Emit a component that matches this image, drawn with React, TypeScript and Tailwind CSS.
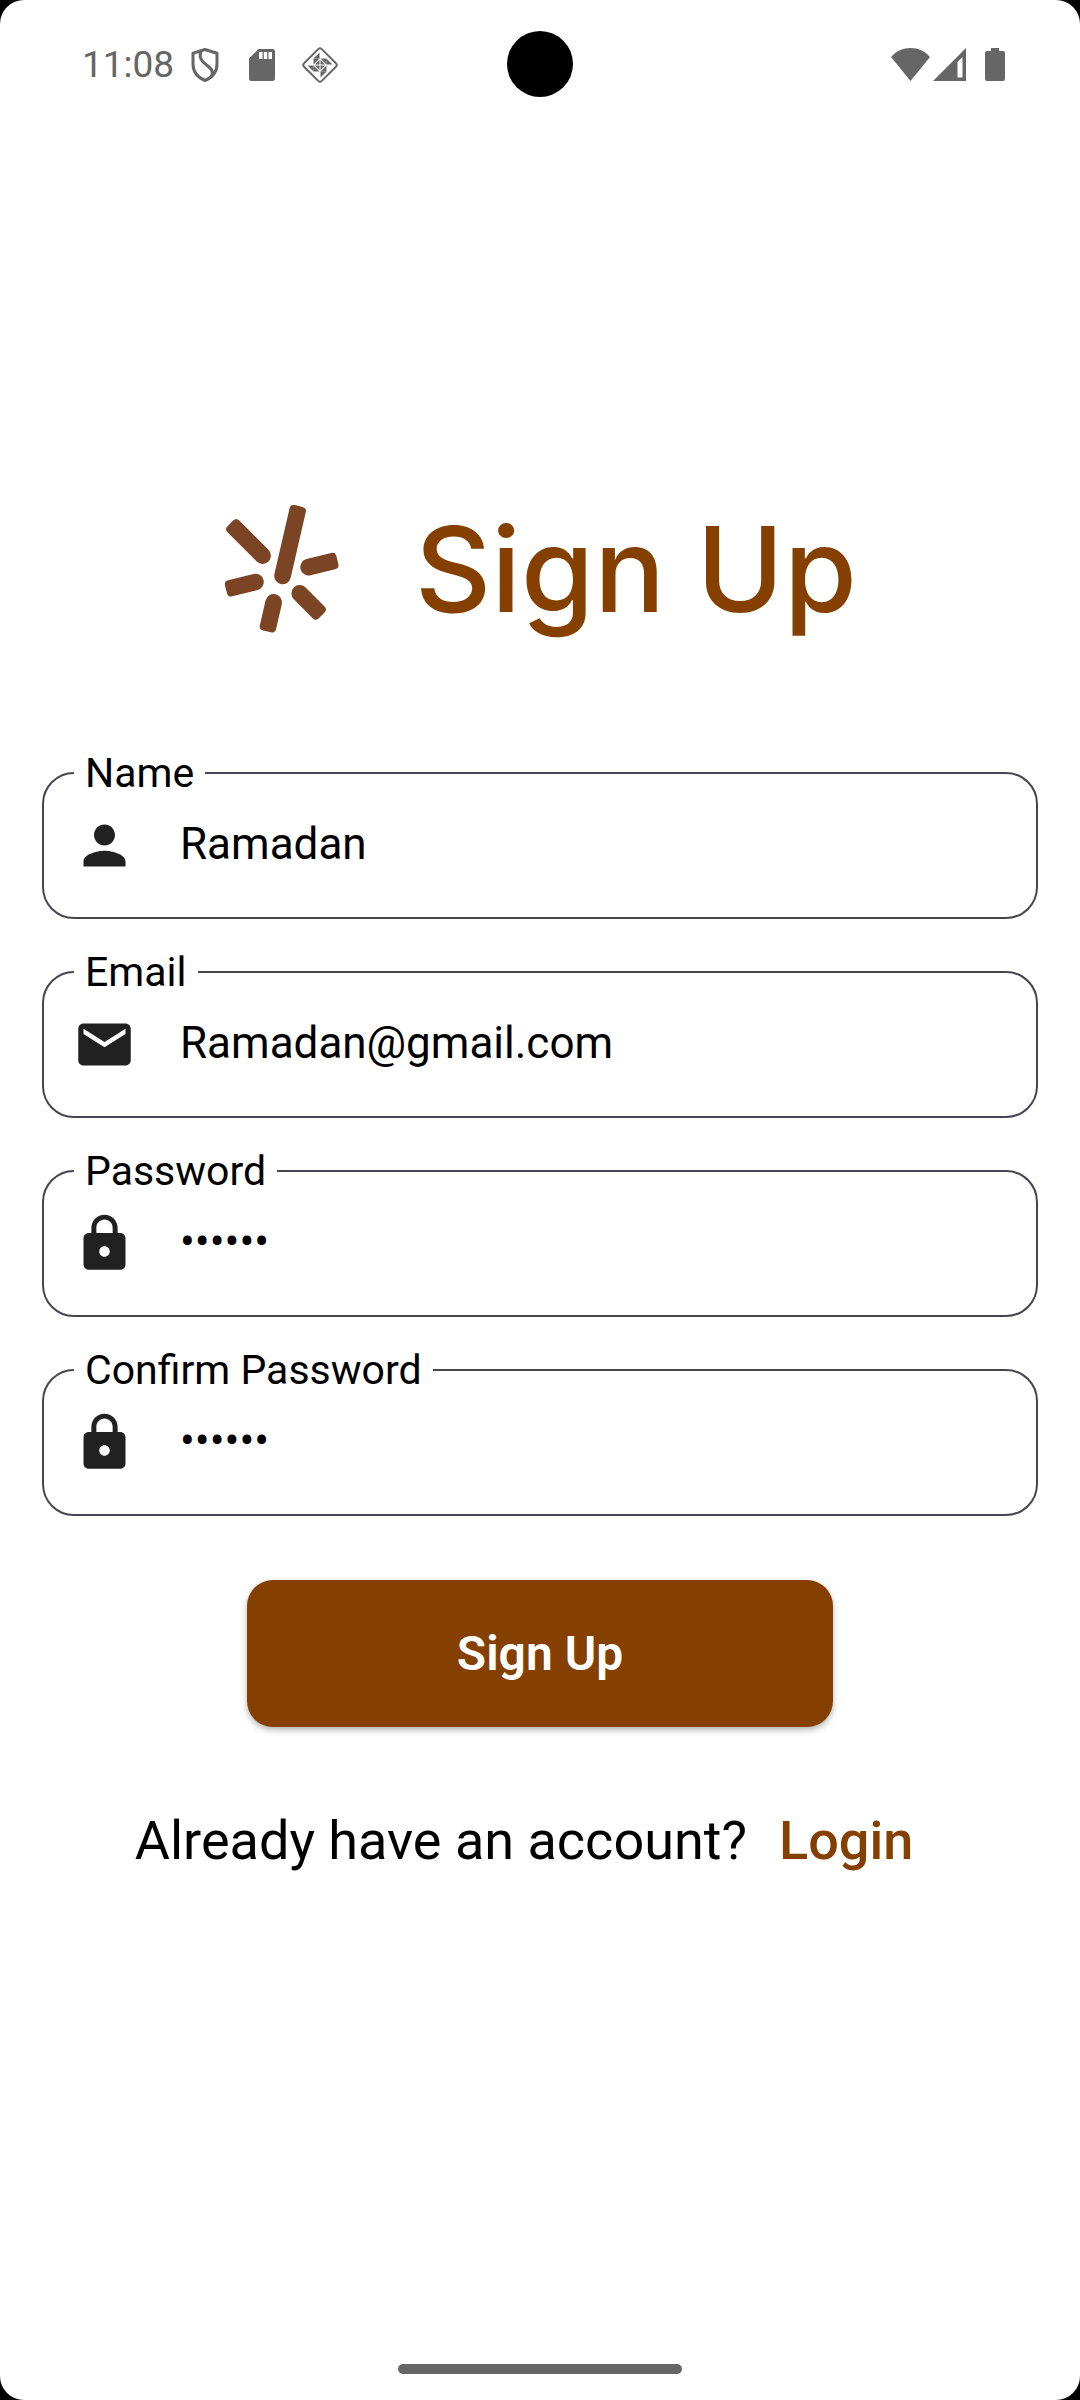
import type { ReactNode } from "react";
import { MdEmail, MdLock, MdPerson } from "react-icons/md";

const bars = [
  { x: 302, y: 79, angle: 13, length: 240 },
  { x: 97, y: 131, angle: -45, length: 162 },
  { x: 418, y: 241, angle: 76, length: 114 },
  { x: 84, y: 329, angle: -104, length: 116 },
  { x: 207, y: 455, angle: 193, length: 114 },
  { x: 371, y: 407, angle: 135, length: 118 },
];

function Logo() {
  return (
    <svg viewBox="75 70 354 396" className="h-[132px] w-[118px] shrink-0 fill-[#7b4424]" aria-hidden="true">
      {bars.map((b) => (
        <path
          key={b.angle}
          transform={`translate(${b.x} ${b.y}) rotate(${b.angle})`}
          d={`M-25 13Q-25 0-12 0H12Q25 0 25 13V${b.length - 25}A25 25 0 0 1-25 ${b.length - 25}Z`}
        />
      ))}
    </svg>
  );
}

function StatusBar() {
  return (
    <header className="grid h-32 grid-cols-[1fr_auto_1fr] items-center text-[#666]">
      <div className="flex items-center pt-0.5 pl-[82px]">
        <span className="mr-4 text-[37px] leading-[44px]">11:08</span>
        <svg viewBox="0 0 30 36" className="mr-[29px] h-9 w-[30px]" fill="none" stroke="currentColor" strokeWidth="3" aria-hidden="true">
          <path d="M15 2.500 27 6.300V17C27 25 22 30.500 15 33.500 8 30.500 3 25 3 17V6.300Z" strokeLinejoin="round" />
          <path d="M11 4C9.500 8 10 12 13 15L19.500 20.500C23 23.500 23 26 21.500 29" />
        </svg>
        <svg viewBox="0 0 26 32" className="mr-[26px] h-8 w-[26px]" aria-hidden="true">
          <path
            fill="currentColor"
            fillRule="evenodd"
            d="M9.500 0H23.500Q26 0 26 2.500V29.500Q26 32 23.500 32H2.500Q0 32 0 29.500V9.500ZM10 3V10H13.500V3ZM14.800 3V10H18.300V3ZM19.600 3V10H23V3Z"
          />
        </svg>
        <svg viewBox="0 0 38 38" className="size-[38px]" aria-hidden="true">
          <rect x="6.500" y="6.500" width="25" height="25" rx="2.500" transform="rotate(45 19 19)" fill="none" stroke="currentColor" strokeWidth="2" />
          {[0, 90, 180, 270].map((turn) => (
            <path
              key={turn}
              transform={`rotate(${turn} 19 19)`}
              fill="currentColor"
              d="M18.500 6.500V12.500H12.500ZM19.500 12.500H25.500V18.500ZM18.500 14V18.500H14Z"
            />
          ))}
        </svg>
      </div>
      <div className="size-[66px] rounded-full bg-black" />
      <div className="flex items-center justify-end pr-[75px]">
        <svg viewBox="0 0 39 33" className="mr-[3px] h-[33px] w-[39px]" fill="currentColor" aria-hidden="true">
          <path d="M0 9C10-3 29-3 39 9L19.500 33Z" />
        </svg>
        <svg viewBox="0 0 33 33" className="mr-[19px] size-[33px]" fill="currentColor" fillRule="evenodd" aria-hidden="true">
          <path d="M33 0V33H0ZM29.500 9 24.500 14V29.500H29.500Z" />
        </svg>
        <svg viewBox="0 0 20 33" className="h-[33px] w-5" fill="currentColor" aria-hidden="true">
          <path d="M6 0H14V3H18Q20 3 20 5V31Q20 33 18 33H2Q0 33 0 31V5Q0 3 2 3H6Z" />
        </svg>
      </div>
    </header>
  );
}

type FieldProps = { id: string; label: string; type: string; value: string; icon: ReactNode };

function Field({ id, label, type, value, icon }: FieldProps) {
  return (
    <fieldset className="min-w-0 rounded-[32px] border-2 border-[#47464f] pb-[23px]">
      <legend className="ml-[30px] px-[11px] text-[41px] leading-[46px] text-black">
        <label htmlFor={id}>{label}</label>
      </legend>
      <div className="flex h-[98px] items-center gap-11 pr-8 pl-[29px]">
        <span className="shrink-0 text-[63px] text-[#212121]">{icon}</span>
        <input
          id={id}
          type={type}
          defaultValue={value}
          className="w-full min-w-0 bg-transparent pb-0.5 text-[44px] leading-[56px] text-black outline-none"
        />
      </div>
    </fieldset>
  );
}

export default function App() {
  return (
    <div className="min-h-screen bg-black font-['Roboto',sans-serif]">
      <div className="flex min-h-screen flex-col rounded-[24px] bg-white">
        <StatusBar />
        <main className="flex-1 px-[42px] pt-[375px]">
          <div className="flex items-center justify-center gap-[74px]">
            <Logo />
            <h1 className="font-['Inter',sans-serif] text-[118px] leading-[132px] font-medium whitespace-nowrap text-[#854000]">
              Sign Up
            </h1>
          </div>
          <form className="mt-[115px] flex flex-col" onSubmit={(e) => e.preventDefault()}>
            <div className="flex flex-col gap-[30px]">
              <Field id="name" label="Name" type="text" value="Ramadan" icon={<MdPerson />} />
              <Field id="email" label="Email" type="email" value="Ramadan@gmail.com" icon={<MdEmail />} />
              <Field id="password" label="Password" type="password" value="secret" icon={<MdLock />} />
              <Field id="confirm" label="Confirm Password" type="password" value="secret" icon={<MdLock />} />
            </div>
            <button
              type="submit"
              className="mt-16 h-[147px] w-full max-w-[586px] self-center rounded-[26px] bg-[#854000] text-[48px] font-semibold text-white shadow-[0_3px_6px_rgba(0,0,0,0.3)]"
            >
              Sign Up
            </button>
          </form>
          <p className="mt-[82px] flex items-center justify-center gap-8 pr-8 text-[54px] leading-[64px] text-black">
            Already have an account?
            <a href="#login" className="font-medium text-[#854000]">
              Login
            </a>
          </p>
        </main>
        <footer className="flex justify-center pb-[26px]">
          <div className="h-[10px] w-[284px] rounded-full bg-[#666]" />
        </footer>
      </div>
    </div>
  );
}
